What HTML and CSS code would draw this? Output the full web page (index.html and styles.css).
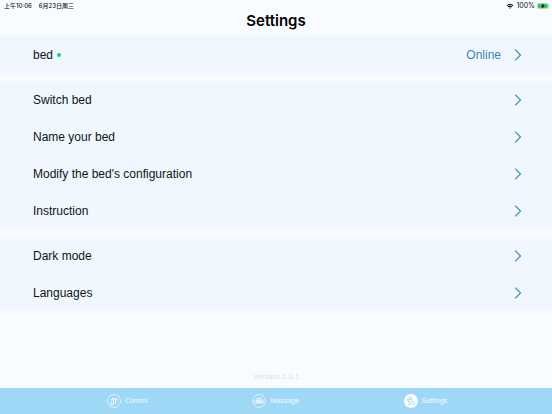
FILE: index.html
```html
<!DOCTYPE html>
<html lang="en">
<head>
<meta charset="utf-8">
<meta name="viewport" content="width=device-width, initial-scale=1">
<title>Settings</title>
<link rel="stylesheet" href="styles.css">
</head>
<body>
<svg class="defs" aria-hidden="true">
  <symbol id="chevron" viewBox="0 0 8 12"><path d="M1.2 0.7 L6.5 6 L1.2 11.3" fill="none" stroke="currentColor" stroke-width="1.1"/></symbol>
</svg>
<div class="status">
  <div class="status-group status-time" lang="zh-CN"><span>上午10:06</span><span>6月23日周三</span></div>
  <div class="status-group">
    <svg class="wifi" viewBox="0 0 14 10" aria-hidden="true">
      <path d="M0.8 3.7 Q7 -1.7 13.2 3.7 L11.9 5 Q7 0.9 2.1 5Z"/>
      <path d="M3 5.9 Q7 2.5 11 5.9 L9.6 7.2 Q7 5.1 4.4 7.2Z"/>
      <path d="M5.3 8.1 Q7 6.8 8.7 8.1 L7 9.8Z"/>
    </svg>
    <span class="percent">100%</span>
    <svg class="battery" viewBox="0 0 26 12" aria-hidden="true">
      <rect x="0.6" y="0.6" width="22" height="10.8" rx="3" fill="#c9f0d3" stroke="#a3aaa6" stroke-width="1"/>
      <rect x="1.8" y="1.8" width="19.6" height="8.4" rx="2" fill="#35d05b"/>
      <path d="M24 4 Q25.6 6 24 8Z" fill="#a3aaa6"/>
      <path d="M13.4 0.4 L7.6 6.8 H11 L10 11.6 L16 5.2 H12.4Z" fill="#111"/>
    </svg>
  </div>
</div>
<header class="header"><h1>Settings</h1></header>
<main class="content">
  <section class="group">
    <button class="row" type="button"><span class="label">bed</span><span class="dot"></span><span class="value">Online</span><svg class="chevron"><use href="#chevron"/></svg></button>
  </section>
  <section class="group">
    <button class="row" type="button"><span class="label">Switch bed</span><svg class="chevron"><use href="#chevron"/></svg></button>
    <button class="row" type="button"><span class="label">Name your bed</span><svg class="chevron"><use href="#chevron"/></svg></button>
    <button class="row" type="button"><span class="label">Modify the bed's configuration</span><svg class="chevron"><use href="#chevron"/></svg></button>
    <button class="row" type="button"><span class="label">Instruction</span><svg class="chevron"><use href="#chevron"/></svg></button>
  </section>
  <section class="group">
    <button class="row" type="button"><span class="label">Dark mode</span><svg class="chevron"><use href="#chevron"/></svg></button>
    <button class="row" type="button"><span class="label">Languages</span><svg class="chevron"><use href="#chevron"/></svg></button>
  </section>
  <p class="version">Version 2.3.1</p>
</main>
<nav class="tabs">
  <a class="tab" href="#control">
    <svg class="tab-icon" viewBox="0 0 28 28" fill="none" stroke="#fff" aria-hidden="true">
      <circle cx="14" cy="14" r="13" stroke-width="1.5" opacity=".85"/>
      <path d="M13 19 A3 3 0 1 1 10 16 M13 19 V8 L8 12.5 M17 19.5 V8.5 Q18 11.5 21.5 12.5" stroke-width="2"/>
    </svg>
    <span>Control</span>
  </a>
  <a class="tab" href="#massage">
    <svg class="tab-icon" viewBox="0 0 28 28" fill="none" stroke="#fff" aria-hidden="true">
      <circle cx="14" cy="14" r="13" stroke-width="1.5" opacity=".85"/>
      <path d="M4.5 18 A9.5 9.5 0 0 1 23.5 18Z M8 18 A6 6 0 0 1 20 18 M11 18 A3 3 0 0 1 17 18" stroke-width="1.5"/>
      <path d="M14 8.5 V18 M7.5 11 L12 17 M20.5 11 L16 17" stroke-width="1"/>
    </svg>
    <span>Massage</span>
  </a>
  <a class="tab" href="#settings" aria-current="page">
    <svg class="tab-icon" viewBox="0 0 28 28" fill="none" stroke="#8ccff2" aria-hidden="true">
      <circle cx="14" cy="14" r="14" fill="#fff" stroke="none"/>
      <path d="M10 7 L13 10 L11 12.5 L7.5 10 C6.5 14 9 16.5 12.5 15.5 L18 21 C20 22 22 20 20.5 18 L15.5 13 C16.5 9 14 6 10 7Z" stroke-width="1.8" stroke-linejoin="round"/>
      <path d="M7.5 20.5 H14" stroke-width="1.6"/>
    </svg>
    <span>Settings</span>
  </a>
</nav>
</body>
</html>
```
FILE: styles.css
```css
* { box-sizing: border-box; }
body {
  margin: 0;
  min-height: 100vh;
  display: flex;
  flex-direction: column;
  background: #f9fcff;
  color: #111416;
  font-family: "Liberation Sans", "Noto Sans CJK SC", sans-serif;
}
.defs { position: absolute; width: 0; height: 0; }
.status {
  display: flex;
  justify-content: space-between;
  align-items: center;
  height: 11px;
  padding: 0 2px 0 4px;
  font-family: Inter, "Noto Sans CJK SC", sans-serif;
  font-size: 6px;
  line-height: 11px;
}
.status-group { display: flex; align-items: center; gap: 2px; }
.status-time { gap: 7px; font-weight: 500; }
.percent { font-size: 7px; }
.wifi { width: 8px; height: 6px; }
.battery { width: 13px; height: 6px; }
.header { height: 25px; text-align: center; }
h1 {
  margin: 0;
  font-family: Inter, sans-serif;
  font-size: 15px;
  line-height: 20px;
  font-weight: 600;
  color: #000;
}
.content { flex: 1; display: flex; flex-direction: column; gap: 8px; }
.group { background: #f0f7ff; }
.row {
  display: flex;
  align-items: center;
  width: 100%;
  height: 37px;
  padding: 0 30px 0 33px;
  border: 0;
  background: none;
  color: inherit;
  font: inherit;
  font-size: 12px;
  text-align: left;
}
.dot { width: 4px; height: 4px; margin-left: 4px; border-radius: 50%; background: #20d267; }
.value { margin-left: auto; color: #3a87b0; }
.chevron { width: 8px; height: 12px; margin-left: auto; color: #3a87b0; }
.value + .chevron { margin-left: 13px; }
.version { margin: auto 0 5px; text-align: center; font-size: 8px; line-height: 12px; color: #dde0e3; }
.tabs {
  display: flex;
  justify-content: space-evenly;
  align-items: center;
  height: 26px;
  padding-left: 2px;
  background: #9ed8f6;
}
.tab {
  display: flex;
  align-items: center;
  gap: 4px;
  color: #f4fbff;
  font-size: 7px;
  line-height: 10px;
  text-decoration: none;
}
.tab-icon { width: 14px; height: 14px; }
```
